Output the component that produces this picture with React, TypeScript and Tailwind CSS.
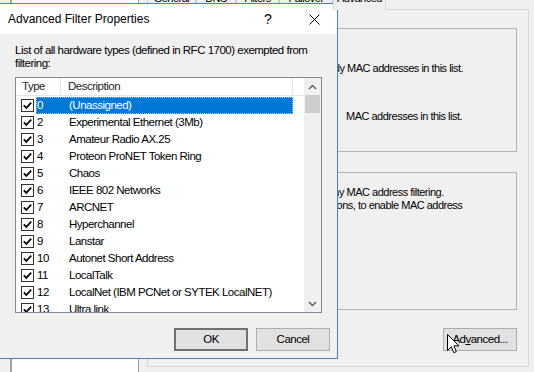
import React from 'react'

const rows = [
  { n: '0', d: '(Unassigned)' },
  { n: '2', d: 'Experimental Ethernet (3Mb)' },
  { n: '3', d: 'Amateur Radio AX.25' },
  { n: '4', d: 'Proteon ProNET Token Ring' },
  { n: '5', d: 'Chaos' },
  { n: '6', d: 'IEEE 802 Networks' },
  { n: '7', d: 'ARCNET' },
  { n: '8', d: 'Hyperchannel' },
  { n: '9', d: 'Lanstar' },
  { n: '10', d: 'Autonet Short Address' },
  { n: '11', d: 'LocalTalk' },
  { n: '12', d: 'LocalNet (IBM PCNet or SYTEK LocalNET)' },
  { n: '13', d: 'Ultra link' },
]

const tabs = [
  { label: 'General', w: 'w-[49px]' },
  { label: 'DNS', w: 'w-[40px]' },
  { label: 'Filters', w: 'w-[43px]' },
  { label: 'Failover', w: 'w-[54px]' },
]

function Check() {
  return (
    <svg width="13" height="13" viewBox="0 0 13 13" className="shrink-0">
      <rect x="0.5" y="0.5" width="12" height="12" fill="#fff" stroke="#333" />
      <path d="M2.8 6.4 L5.3 8.9 L10.2 3.6" fill="none" stroke="#000" strokeWidth="1.7" />
    </svg>
  )
}

function Chevron({ down }: { down?: boolean }) {
  return (
    <svg width="9" height="6" viewBox="0 0 9 6">
      <path d={down ? 'M1 1 L4.5 4.5 L8 1' : 'M1 5 L4.5 1.5 L8 5'} fill="none" stroke="#606060" strokeWidth="1.5" />
    </svg>
  )
}

export default function App() {
  return (
    <div className="relative w-[534px] h-[372px] overflow-hidden bg-[#f0f0f0] text-black font-['Liberation_Sans',Arial,sans-serif]">
      {/* background: console tree + properties sheet */}
      <div className="flex h-full text-[11px] tracking-[-0.5px]">
        <div className="w-[10px] shrink-0" />
        <div className="w-[129px] shrink-0 h-full bg-white border-l-2 border-r border-[#a0a0a0]" />
        <div className="flex-1 flex flex-col pl-[8px] pr-[5px]">
          <div className="flex -mt-[11px] h-[20px] items-end">
            {tabs.map(t => (
              <div key={t.label} className={`${t.w} h-[18px] pb-[5px] border border-b-0 border-[#c8c8c8] flex items-center justify-center leading-none`}>
                {t.label}
              </div>
            ))}
            <div className="relative z-10 w-[53px] h-[20px] pb-[5px] -mb-px bg-[#f0f0f0] border border-b-0 border-[#d9d9d9] flex items-center justify-center leading-none">
              Advanced
            </div>
          </div>
          <div className="h-[358px] border border-[#d9d9d9] flex flex-col pt-[18px] pl-[9px] pr-[11px]">
            <div className="h-[124px] border border-[#b4b4b4] flex flex-col leading-[14px]">
              <div className="mt-[32px] pl-[142px] whitespace-nowrap">Allow only MAC addresses in this list.</div>
              <div className="mt-[34px] pl-[188px] whitespace-nowrap">MAC addresses in this list.</div>
            </div>
            <div className="mt-[20px] h-[138px] border border-[#b4b4b4] flex flex-col leading-[13px]">
              <div className="mt-[13px] pl-[134px] whitespace-nowrap">Disable any MAC address filtering.</div>
              <div className="pl-[96px] whitespace-nowrap">Select the filter options, to enable MAC address</div>
            </div>
            <div className="mt-[18px] flex justify-end">
              <div className="w-[74px] h-[23px] bg-[#e1e1e1] border border-[#adadad] flex items-center justify-center text-[11.5px]">
                Ad<span className="underline">v</span>anced...
              </div>
            </div>
          </div>
        </div>
      </div>

      {/* Advanced Filter Properties dialog */}
      <div className="absolute left-[-10px] top-[3px] w-[348px] h-[356px] border border-[#3d85c6] bg-[#f0f0f0] flex flex-col">
        <div className="h-[30px] bg-white flex items-center text-[12px]">
          <div className="flex-1 pl-[17px]">Advanced Filter Properties</div>
          <div className="w-[46px] h-full flex items-center justify-center text-[14px]">?</div>
          <div className="w-[46px] h-full flex items-center justify-center">
            <svg width="11" height="11" viewBox="0 0 11 11">
              <path d="M0.5 0.5 L10.5 10.5 M10.5 0.5 L0.5 10.5" stroke="#000" strokeWidth="1" />
            </svg>
          </div>
        </div>
        <div className="flex-1 flex flex-col pt-[10px] pl-[24px] pr-[7px] pb-[6px] text-[11.5px] tracking-[-0.5px]">
          <p className="leading-[13px] whitespace-nowrap">
            List of all hardware types (defined in RFC 1700) exempted from<br />filtering:
          </p>
          <div className="mt-[7px] mr-[8px] h-[236px] border border-[#828790] bg-white flex">
            <div className="flex-1 flex flex-col overflow-hidden">
              <div className="h-[18px] shrink-0 flex border-b border-[#e5e5e5] leading-[17px] text-[#1e1e1e]">
                <div className="w-[45px] pl-[6px] border-r border-[#e5e5e5]">Type</div>
                <div className="w-[232px] pl-[7px] border-r border-[#e5e5e5]">Description</div>
              </div>
              <div className="flex-1 pt-[1px] overflow-hidden">
                {rows.map((r, i) => (
                  <div key={r.n} className="h-[17px] flex items-center pl-[5px] leading-[17px] whitespace-nowrap">
                    <Check />
                    <div
                      className={`ml-[2px] w-[257px] shrink-0 h-full flex ${i === 0 ? 'bg-[#0078d7] text-white outline-1 outline-dotted -outline-offset-1 outline-[#a6cbef]' : ''}`}
                    >
                      <span className="w-[26px] shrink-0 pl-[1px]">{r.n}</span>
                      <span className="pl-[7px]">{r.d}</span>
                    </div>
                  </div>
                ))}
              </div>
            </div>
            <div className="w-[17px] shrink-0 bg-[#f0f0f0] flex flex-col">
              <div className="h-[17px] flex items-center justify-center">
                <Chevron />
              </div>
              <div className="mx-[1px] h-[18px] bg-[#cdcdcd]" />
              <div className="flex-1" />
              <div className="h-[17px] flex items-center justify-center">
                <Chevron down />
              </div>
            </div>
          </div>
          <div className="mt-[15px] flex justify-end gap-[8px]">
            <button className="w-[74px] h-[23px] bg-[#e1e1e1] border-2 border-[#707070]">OK</button>
            <button className="w-[74px] h-[23px] bg-[#e1e1e1] border border-[#adadad]">Cancel</button>
          </div>
        </div>
      </div>

      {/* mouse pointer */}
      <svg className="absolute left-[447px] top-[334px]" width="13" height="20" viewBox="0 0 13 20">
        <path d="M0.5 0.5 L0.5 16.5 L4.3 12.8 L6.8 18.7 L9.3 17.6 L6.9 11.9 L12 11.9 Z" fill="#fff" stroke="#000" strokeWidth="1" />
      </svg>
    </div>
  )
}
